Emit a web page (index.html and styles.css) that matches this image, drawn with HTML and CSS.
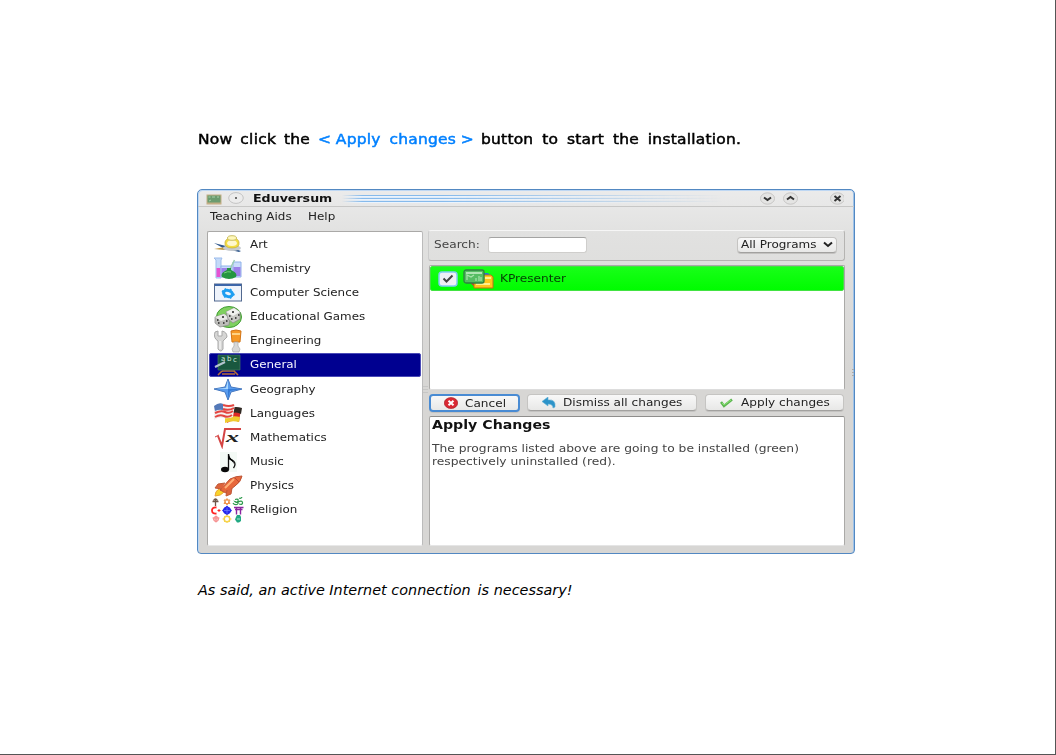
FILE: index.html
```html
<!DOCTYPE html>
<html lang="en">
<head>
<meta charset="utf-8">
<title>Eduversum</title>
<link rel="stylesheet" href="styles.css">
</head>
<body>
<main class="page">
  <p class="lead"><span class="w1">Now click the</span><span class="w2">&lt; <span class="w3">Apply changes</span> &gt;</span><span class="w4">button to start the installation.</span></p>

  <section class="window">
    <header class="titlebar">
      <svg class="app-icon" width="16" height="11" viewBox="0 0 16 11"><rect x=".5" y=".5" width="15" height="10" fill="#c4ae86"/><rect x="1.500" y="1.500" width="13" height="7" fill="#6b9c6f"/><path d="M2.500 3h2M6 3h3M11 3h2M3 7l2-1" stroke="#a9cfaa" fill="none"/></svg>
      <svg class="dot" width="16" height="12" viewBox="0 0 16 12"><ellipse cx="8" cy="6" rx="7.300" ry="5.400" fill="#ececec" stroke="#c4c4c4"/><circle cx="8" cy="6" r="1" fill="#444"/></svg>
      <strong class="t title">Eduversum</strong>
      <span class="stripes"></span>
      <svg class="ctl" width="84" height="14" viewBox="0 0 84 14"><g fill="#e4e4e3" stroke="#c7c6c5"><ellipse cx="7.500" cy="6.500" rx="7" ry="5.700"/><ellipse cx="30.500" cy="6.500" rx="7" ry="5.700"/><ellipse cx="77.500" cy="6.500" rx="7" ry="5.700"/></g><path d="M4 5.500l3.500 2.500 3.500-2.500M27 7.500l3.500-2.500 3.500 2.500M74.500 4l6 5M80.500 4l-6 5" fill="none" stroke="#333" stroke-width="2"/></svg>
    </header>
    <nav class="menu"><span class="t m1">Teaching Aids</span><span class="t">Help</span></nav>
    <div class="content">
      <ul class="list">
        <li><svg viewBox="0 0 30 24"><path d="M1 11l12 3 15 5-2 1-16-4z" fill="#31598d"/><path d="M1 17l11-2 14-1v2l-15 2z" fill="#c59a41"/><ellipse cx="19" cy="16" rx="9" ry="3" fill="#c6cbd0"/><path d="M12 10q1-4 7-4t7 4q1 6-7 6t-7-6z" fill="#f2dd43" stroke="#c6ad3b" stroke-width=".7"/><path d="M14 11q1-3 5-3t5 3q0 3-5 3t-5-3z" fill="#fff8cf"/><ellipse cx="19" cy="6" rx="4.500" ry="2.300" fill="#fff8ba" stroke="#cbbf65"/></svg><span class="t">Art</span></li>
        <li><svg viewBox="0 0 30 24"><path d="M1 2h8l-1 2v18H3V4z" fill="#c4daf9" stroke="#9dbdec"/><path d="M3.500 12h4v9h-4z" fill="#e652d2"/><path d="M8 10h11v11H8zM20 6h8v15h-8z" fill="#c9dcfb" stroke="#8fb2ea"/><path d="M8.500 12h8v8h-8zM20.500 11h7v9h-7z" fill="#9b80e9"/><path d="M16.500 14l5-10" stroke="#9ccdb2" stroke-width="1.500"/><path d="M14 12h4v2q7 3 5 7-7 4-14 0-2-4 5-7z" fill="#249640"/><path d="M11 17q4-2 7-1" stroke="#75ce7b" fill="none"/></svg><span class="t">Chemistry</span></li>
        <li><svg viewBox="0 0 30 24"><rect x="1.500" y="4" width="27" height="17" fill="#eef3fb" stroke="#52698f"/><path d="M2 4h26v2H2z" fill="#3c65a8"/><ellipse cx="15" cy="13.500" rx="4.500" ry="3" fill="none" stroke="#1e9ef1" stroke-width="3" transform="rotate(15 15 13.500)"/><path d="M9 11l2 1M12 8.500l1 2M18 9l-1 2M21.500 15l-2-1M18 18.500l-1-2M11 17l2-1" stroke="#1e9ef1" stroke-width="2"/></svg><span class="t">Computer Science</span></li>
        <li><svg viewBox="0 0 30 24"><ellipse cx="16" cy="12" rx="12.500" ry="10.500" fill="#7fd05f" stroke="#409e32"/><path d="M2 12l9-3 6 4-1 7-9 2-5-4z" fill="#bdbdba" stroke="#888" stroke-width=".7"/><path d="M2 12l9-3 6 4-9 3z" fill="#e8e8e6"/><path d="M13 7l8-4 6 4v7l-7 4-5-4z" fill="#c9c9c5" stroke="#888" stroke-width=".7"/><path d="M13 7l8-4 6 4-7 4z" fill="#f1f1ef"/><path d="M4 15h1.500M5 18h1.500M10 18h1.500M13 16h1.500M9 12h2M16 11h1.500M18 14h1.500M22 13h1.500M25 10h1.500M19 7h2" stroke="#222" stroke-width="1.700"/></svg><span class="t">Educational Games</span></li>
        <li><svg viewBox="0 0 30 24"><path d="M2 3l3-1v5h4V2q5 1 5 6l-4 4v8q-2 4-5 0v-8Q0 9 2 3z" fill="#d6d6d5" stroke="#a9a9a9"/><path d="M7 12v8" stroke="#fff"/><path d="M18 2q5-2 10 0l-1 11h-8z" fill="#f69825" stroke="#d27517"/><path d="M19 5h8" stroke="#ffd182" stroke-width="2"/><path d="M21 13h4v4l2 3-1 3h-6l-1-3 2-3z" fill="#d8d8d8" stroke="#aaa" stroke-width=".7"/></svg><span class="t">Engineering</span></li>
        <li class="selected"><svg viewBox="0 0 30 24"><path d="M9 18l-4 4M21 18l4 4M9 18h13M9 21h13" stroke="#b96e38" stroke-width="1.600"/><path d="M5 2h22v15H5z" fill="#19583f" stroke="#437760" stroke-width=".7"/><path d="M2 14l10-5" stroke="#b4c4d0" stroke-width="2"/><text x="8" y="8" class="abc">a</text><text x="14" y="8" class="abc">b</text><text x="20" y="9" class="abc">c</text></svg><span class="t">General</span></li>
        <li><svg viewBox="0 0 30 24"><path d="M15 2l3 8 11 2-11 3-3 8-3-8-11-3 11-2z" fill="#589cef" stroke="#4678bf"/><path d="M15 3v9H3l10-1z" fill="#addafe"/><path d="M15 12l13 0-11 2-2 8z" fill="#347bd7"/></svg><span class="t">Geography</span></li>
        <li><svg viewBox="0 0 30 24"><path d="M16 8q6-3 12 0l-2 13q-6-3-12 1z" fill="#db2927"/><path d="M17 7q6-2 12 0l-1 6q-5-3-11 0z" fill="#302923"/><path d="M12 17q8-3 15-1l-1 5q-7-2-14 1z" fill="#efcb2e"/><path d="M1 5q6-5 11-2t10 0l-2 13q-5 2-10 1t-9 2z" fill="#f5f0ef"/><path d="M10 4q6 2 11 0M10 8q6 2 11-1M2 12q6-3 10-1t8-1M2 16q5-3 9-1t8-1" fill="none" stroke="#e34540" stroke-width="2"/><path d="M1 5q5-4 9-2v6q-4-1-8 1z" fill="#5479b8"/></svg><span class="t">Languages</span></li>
        <li><svg viewBox="0 0 30 24"><path d="M2 12l4-2" stroke="#d54443"/><path d="M5 11l4 10L12 4h16" fill="none" stroke="#d54443" stroke-width="2"/><text x="13" y="17" class="mathx" textLength="13" lengthAdjust="spacingAndGlyphs">x</text></svg><span class="t">Mathematics</span></li>
        <li><svg viewBox="0 0 30 24"><rect x="7" y="2" width="17" height="20" fill="#f4faf6"/><ellipse cx="12" cy="19.500" rx="4" ry="2.800" fill="#090909"/><path d="M15.500 20V4q0 5 5 7 3 3 0 7" fill="none" stroke="#111" stroke-width="1.300"/><path d="M16 4q0 4 4 6l1 4q-2-4-6-5z"/></svg><span class="t">Music</span></li>
        <li><svg viewBox="0 0 30 24"><path d="M2 22q0-5 4-7l5 3q-3 4-9 4z" fill="#f8d42b" stroke="#eca436"/><path d="M7 16l10-11q6-3 12-3-1 6-7 10l-9 7z" fill="#e7683b" stroke="#bd5434"/><path d="M12 9l-7 1-3 4 7 1M19 14l-1 6-5 2 1-6" fill="#dd633c" stroke="#bf5938"/><path d="M12 14l9-9" stroke="#ffb078" stroke-width="2"/><path d="M22 4l4 4" stroke="#bd4932"/></svg><span class="t">Physics</span></li>
        <li><svg viewBox="0 0 34 26" class="wide"><path d="M5.500 2.500v6.500M2.500 4.500h6M3.500 3.500q2-3 4 0" fill="none" stroke="#6e5549" stroke-width="1.300"/><path d="M17 1.500l3 5h-6zM17 8l3-5h-6z" fill="none" stroke="#ef944c"/><path d="M25 2.500q4-1 3 1.500t-3 .5q5 1 2 3-3 .5-4-1.500M28 5q4-2 4.500.5t-3.500 1.500M29 1q2 1 3-1" fill="none" stroke="#2d9a4c" stroke-width="1.200"/><path d="M6.500 10.500q-4.500-.5-4.500 3t4.500 3" fill="none" stroke="#f22" stroke-width="1.800"/><path d="M9 12v3M7.500 13.500h3" stroke="#f22"/><path d="M17 8.500l5 5-5 5-5-5z" fill="#2528ed"/><circle cx="17" cy="13.500" r="3.800" fill="#2528ed"/><path d="M14 13.500h6M17 10.500v6" stroke="#7182ff" stroke-width=".7"/><path d="M24 10.500h9.500M25 12.500h7.500M26.500 10.500v7M30.500 10.500v7" stroke="#8b259f" stroke-width="1.400"/><circle cx="6" cy="22" r="2.500" fill="#f9bcbc" stroke="#f68c8c"/><path d="M2.500 21h7M6 18.500v7" stroke="#f68c8c"/><circle cx="17" cy="22" r="2.800" fill="none" stroke="#f6d34b" stroke-width="1.500"/><path d="M17 17.500v2M17 24.500v2M12.500 22h2M19.500 22h2M14 19l1 1M20 19l-1 1M14 25l1-1M20 25l-1-1" stroke="#f6d34b"/><path d="M26 20l1-2h3l1 2v4l-2 1.500h-2l-2-3z" fill="#22a983"/><path d="M27 22h3" stroke="#a4e3cf"/></svg><span class="t">Religion</span></li>
      </ul>
      <div class="grip-v"></div>
      <div class="right">
        <div class="searchbar"><label class="t" for="q">Search:</label><input id="q" type="text"><button class="select"><span class="t">All Programs</span><svg width="10" height="7" viewBox="0 0 10 7"><path d="M1 1.500l4 3.500 4-3.500" fill="none" stroke="#222" stroke-width="2"/></svg></button></div>
        <div class="programs"><div class="program">
          <svg class="check" width="20" height="16" viewBox="0 0 20 16"><rect x="1" y="1" width="18" height="14" rx="3" fill="#eff0f5" stroke="#83caf2" stroke-width="1.500"/><path d="M5.500 7.500l3 3 6-6" fill="none" stroke="#444" stroke-width="2"/></svg>
          <svg class="kp" width="31" height="20" viewBox="0 0 31 20"><path d="M9 4h16l3 3v9H9z" fill="#296edb"/><path d="M6 13l6 5v-6z" fill="#d63924"/><path d="M20 6h8l2 2v11H11v-6h9z" fill="#ffc61c" stroke="#bb7412"/><path d="M13 15h14M22 9h6" stroke="#fff18a" stroke-width="2"/><rect x="1" y="1" width="20" height="13" rx="2" fill="#56bd64" stroke="#2f8040" stroke-width="1.300"/><path d="M3 3h16v2H3z" fill="#b0e5b4"/><path d="M4 11V6l4 2 3-2M13 12V9M16 12V7M18 12V8" fill="none" stroke="#a8e5ac" stroke-width="1.200"/></svg>
          <span class="t">KPresenter</span></div></div>
        <div class="actions">
          <button class="btn focus"><svg width="14" height="12" viewBox="0 0 14 12"><ellipse cx="7" cy="6" rx="6.700" ry="5.500" fill="#d92933" stroke="#a3141d" stroke-width=".6"/><path d="M4.500 3.800l5 4.400M9.500 3.800l-5 4.400" stroke="#fff" stroke-width="2"/></svg><span class="t">Cancel</span></button>
          <button class="btn dismiss"><svg width="14" height="12" viewBox="0 0 14 12"><path d="M0 4.500L6 0v3q8-1 7 7l-2 1q0-4-5-4v2z" fill="#2c93c9" stroke="#5eafd3" stroke-width=".6"/></svg><span class="t">Dismiss all changes</span></button>
          <button class="btn apply"><svg width="13" height="10" viewBox="0 0 13 10"><path d="M1 4l3 4 8-6.500" fill="none" stroke="#5bb650" stroke-width="2.500"/><path d="M2 5l2 2 7-5" fill="none" stroke="#8be071"/></svg><span class="t">Apply changes</span></button>
        </div>
        <article class="info"><h2 class="t">Apply Changes</h2><p class="t">The programs listed above are going to be installed (green)<br>respectively uninstalled (red).</p></article>
      </div>
      <div class="grip-r"></div>
    </div>
  </section>
  <p class="note"><span>As said, an active Internet connection</span><span>is necessary!</span></p>
</main>
</body>
</html>
```
FILE: styles.css
```css
* { box-sizing: border-box; }
body { margin: 0; background: #fff; font-family: "DejaVu Sans", sans-serif; color: #000; }
.page { width: 1056px; height: 755px; padding: 129px 0 0 197px; border-right: 1px solid #555; border-bottom: 1px solid #555; overflow: hidden; }
.lead { display: flex; margin: 0; height: 60px; font-size: 14.3px; line-height: 20px; white-space: nowrap; -webkit-text-stroke: .5px; letter-spacing: .22px; transform: scaleX(1.08); transform-origin: 0 0; }
.w1 { width: 112px; padding-left: 1px; word-spacing: 2.6px; }
.w2 { width: 151px; color: #0080ff; word-spacing: -.4px; }
.w3 { word-spacing: 3.4px; }
.w4 { word-spacing: 3.4px; }
.t { display: inline-block; font-size: 10.3px; line-height: 13px; white-space: nowrap; transform: scaleX(1.18); transform-origin: 0 50%; color: #222; }
.window { width: 658px; height: 365px; border: 1px solid #5288c2; border-radius: 5px 5px 4px 4px; background: linear-gradient(#ebebeb, #e1e1e0 45px, #d7d6d4 180px); box-shadow: inset 1px 1px #bed7f3, inset -1px 0 #9fc2e7; }
.titlebar { display: flex; height: 17px; padding: 3px 9px 0 8px; border-bottom: 1px solid #c7c7c6; }
.app-icon { margin-top: 1px; }
.dot { margin-left: 6px; margin-top: -1px; }
.title { width: 89px; margin-left: 9px; margin-top: -1px; font-weight: 700; color: #111; transform: scaleX(1.225); }
.stripes { width: 382px; height: 8px; margin-top: 2px; background: repeating-linear-gradient(#86baeb 0 1px, #eaf3fd 1px 2px, #ddeaf8 2px 3px); -webkit-mask-image: linear-gradient(90deg, transparent, #000 20px, #000 100px, transparent); }
.ctl { margin-left: 36px; margin-top: -1px; flex: none; }
.menu { display: flex; height: 24px; padding: 3px 12px; }
.menu .t { transform: scaleX(1.16); }
.m1 { width: 98px; }
.content { display: flex; height: 320px; padding-left: 9px; }
.list { width: 216px; height: 315px; margin: 0; padding: 0 1px; list-style: none; background: #fff; border: 1px solid #aaa9a7; border-right-color: #bbb; border-bottom-color: #e8e8e8; border-radius: 2px; }
.list li { display: flex; align-items: center; height: 24.18px; padding-left: 4px; gap: 7px; }
.list li .t { transform: scaleX(1.155); }
.list svg { width: 30px; height: 24px; flex: none; }
.list .wide { width: 34px; height: 26px; margin: 0 -1px 0 -3px; }
.list .selected { background: #000090; border: 1px solid #4b4bb7; border-radius: 2px; padding-left: 3px; }
.selected .t { color: #f4f4ff; }
.abc { font-size: 7px; fill: #d4e9de; }
.mathx { font: italic bold 15px "Liberation Serif", serif; fill: #222; }
.grip-v { width: 5px; height: 8px; margin-top: 154px; background: radial-gradient(circle, #bbb 0 .7px, transparent 1px) 0 0 / 2px 3px; opacity: .6; }
.grip-r { width: 2px; height: 8px; margin: 137px 0 0 7px; background: radial-gradient(circle, #aaa 0 .7px, transparent 1px) 0 0 / 2px 3px; }
.right { width: 417px; }
.searchbar { display: flex; align-items: center; height: 31px; margin-top: -1px; padding: 0 7px 2px 5px; border: 1px solid #b5b4b2; border-top-color: #f6f6f6; border-left-color: #ccc; border-radius: 3px; }
.searchbar label { width: 53px; color: #444; }
input { width: 99px; height: 16px; margin-left: 1px; border: 1px solid #cfcecc; border-top-color: #a4a4a3; border-radius: 3px; background: #fff; outline: none; padding: 0; }
button { font-family: inherit; border: 1px solid #c5c4c2; border-bottom-color: #a2a19f; border-radius: 4px; background: linear-gradient(#f8f8f8, #e8e8e7); box-shadow: 0 1px #c3c2c0; padding: 0; display: flex; align-items: center; }
.select { width: 100px; height: 16px; margin-left: auto; padding-left: 3px; }
.select .t { width: 82px; text-align: left; transform: scaleX(1.165); }
.programs { height: 125px; margin: 4px 0 0 1px; padding: 0; border: 1px solid #aaa9a7; border-bottom-color: #ddd; background: #fff; border-radius: 2px; }
.program { display: flex; align-items: center; height: 25px; padding-left: 7px; background: linear-gradient(#18ff18, #00fc00); border: 1px solid #42e342; border-radius: 2px; }
.kp { margin: 0 6px 0 5px; }
.program .t { color: #063b06; }
.actions { display: flex; height: 22px; padding: 4px 0 0 1px; gap: 8px; }
.actions svg { flex: none; }
.btn { height: 17px; }
.btn .t { text-align: left; transform: scaleX(1.175); }
.focus { width: 91px; height: 18px; border: 2px solid #498bd3; padding-left: 13px; gap: 7px; }
.dismiss { width: 170px; margin-left: -1px; padding-left: 14px; gap: 7px; }
.apply { width: 139px; padding-left: 14px; gap: 8px; }
.info { height: 130px; margin: 4px 0 0 1px; padding: 1px 2px; border: 1px solid #aaa9a7; border-top-color: #8e8d8b; border-bottom-color: #e5e5e5; background: #fff; border-radius: 2px; }
.info h2 { display: block; margin: 0; font-size: 12px; line-height: 14px; color: #111; }
.info p { display: block; margin: 10px 0 0; color: #444; transform: scaleX(1.193); }
.note { display: flex; gap: 7px; margin: 26px 0 0; padding-left: 1px; font-size: 14.4px; line-height: 20px; font-style: italic; white-space: nowrap; }
```
